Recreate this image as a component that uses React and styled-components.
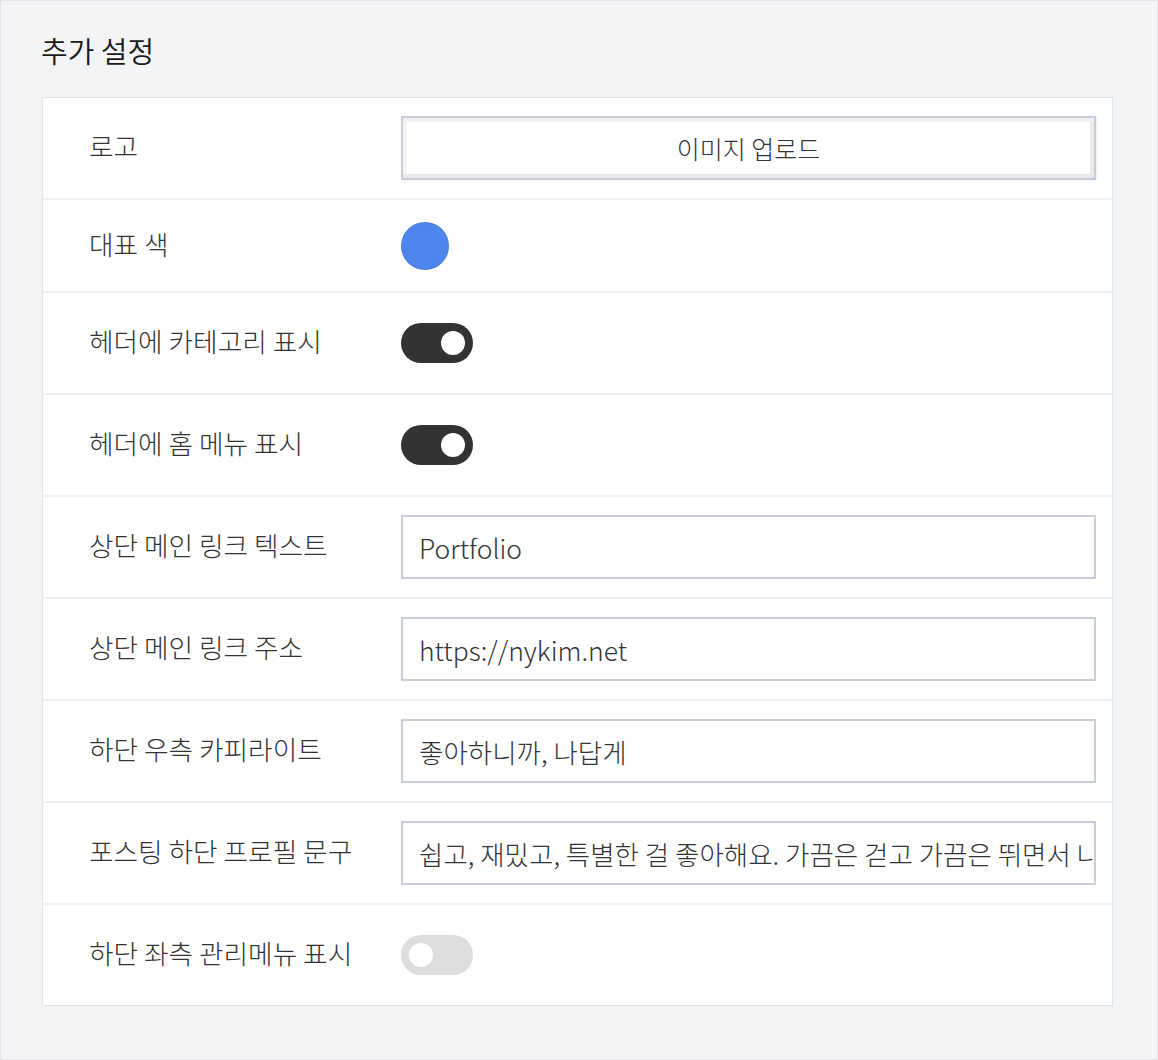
import React from "react";
import styled, { createGlobalStyle } from "styled-components";

const Global = createGlobalStyle`
  html, body { margin: 0; padding: 0; }
  body {
    font-family: "Noto Sans CJK KR", "Noto Sans", sans-serif;
    color: #333;
    background: #f3f4f6;
  }
  * { box-sizing: border-box; }
`;

const Page = styled.div`
  width: 1158px;
  min-height: 1060px;
  background: #f3f4f6;
  border: 1px solid #e3e5ea;
  padding: 24px 44px 52px 40px;
`;

const Title = styled.h2`
  margin: 0 0 22px 0;
  font-size: 29px;
  font-weight: 350;
  line-height: 50px;
  color: #1a1a1a;
`;

const Panel = styled.div`
  background: #fff;
  border: 1px solid #e1e4eb;
  margin-left: 1px;
`;

const Row = styled.div`
  display: grid;
  grid-template-columns: 358px 1fr;
  align-items: center;
  padding: 18px 16px 18px 0;
  border-bottom: ${(p) => (p.$last ? "none" : "2px solid #f0f0f5")};
`;

const Label = styled.div`
  padding-left: 46px;
  font-size: 26.7px;
  font-weight: 300;
  line-height: 40px;
  margin-top: -4px;
  color: #333;
  white-space: nowrap;
`;

const Control = styled.div`
  display: flex;
  align-items: center;
  height: ${(p) => p.$h || 64}px;
`;

const UploadButton = styled.button`
  width: 100%;
  height: 64px;
  background: #fff;
  border: 2px solid #c8cdd7;
  box-shadow: inset 0 -4px 0 #e8e9ec, inset 0 4px 0 #f0f1f3, inset 4px 0 0 #f3f3f5, inset -4px 0 0 #ebebee, 1px 1px 2px rgba(0,0,0,0.08);
  font-family: inherit;
  font-size: 25px;
  font-weight: 300;
  color: #333;
  padding: 0;
  cursor: pointer;
`;

const Swatch = styled.div`
  width: 48px;
  height: 48px;
  border-radius: 50%;
  background: ${(p) => p.$color};
  border: 1px solid rgba(0,0,0,0.06);
`;

const Toggle = styled.div`
  width: 72px;
  height: 40px;
  border-radius: 20px;
  background: ${(p) => (p.$on ? "#333333" : "#dddddd")};
  display: flex;
  align-items: center;
  justify-content: ${(p) => (p.$on ? "flex-end" : "flex-start")};
  padding: 0 8px;
`;

const Knob = styled.div`
  width: 24px;
  height: 24px;
  border-radius: 50%;
  background: #fff;
`;

const TextInput = styled.input`
  width: 100%;
  height: 64px;
  border: 2px solid #c8cdd7;
  background: #fff;
  padding: 0 1px 0 16px;
  font-family: inherit;
  font-size: 26.5px;
  font-weight: 300;
  color: #333;
  outline: none;
`;

const rows = [
  { label: "로고", type: "upload" },
  { label: "대표 색", type: "color" },
  { label: "헤더에 카테고리 표시", type: "toggle", on: true },
  { label: "헤더에 홈 메뉴 표시", type: "toggle", on: true },
  { label: "상단 메인 링크 텍스트", type: "text", value: "Portfolio" },
  { label: "상단 메인 링크 주소", type: "text", value: "https://nykim.net" },
  { label: "하단 우측 카피라이트", type: "text", value: "좋아하니까, 나답게" },
  {
    label: "포스팅 하단 프로필 문구",
    type: "text",
    value: "쉽고, 재밌고, 특별한 걸 좋아해요. 가끔은 걷고 가끔은 뛰면서 나아가요.",
  },
  { label: "하단 좌측 관리메뉴 표시", type: "toggle", on: false },
];

function renderControl(r) {
  switch (r.type) {
    case "upload":
      return (
        <Control>
          <UploadButton>이미지 업로드</UploadButton>
        </Control>
      );
    case "color":
      return (
        <Control $h={55}>
          <Swatch $color="#4f86ee" />
        </Control>
      );
    case "toggle":
      return (
        <Control>
          <Toggle $on={r.on}>
            <Knob />
          </Toggle>
        </Control>
      );
    default:
      return (
        <Control>
          <TextInput defaultValue={r.value} />
        </Control>
      );
  }
}

export default function App() {
  return (
    <>
      <Global />
      <Page>
        <Title>추가 설정</Title>
        <Panel>
          {rows.map((r, i) => (
            <Row key={i} $last={i === rows.length - 1}>
              <Label>{r.label}</Label>
              {renderControl(r)}
            </Row>
          ))}
        </Panel>
      </Page>
    </>
  );
}
